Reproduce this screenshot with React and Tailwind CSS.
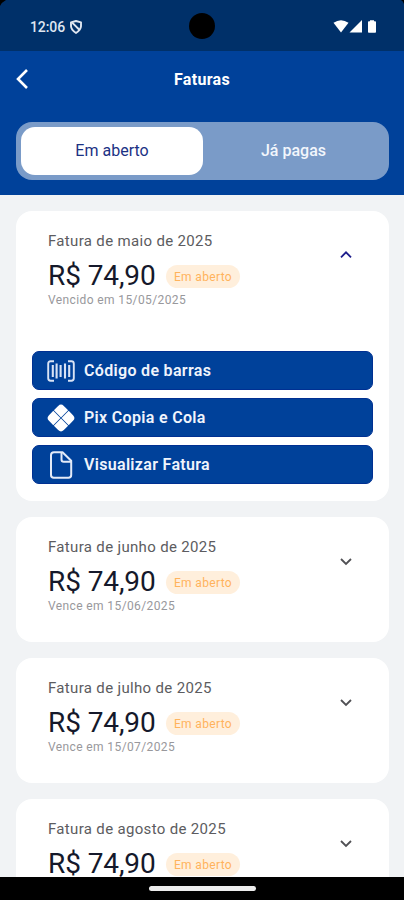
const invoices = [
  { month: "maio", due: "Vencido em 15/05/2025", open: true },
  { month: "junho", due: "Vence em 15/06/2025" },
  { month: "julho", due: "Vence em 15/07/2025" },
  { month: "agosto", due: "Vence em 15/08/2025" },
];

function StatusBar() {
  return (
    <div className="relative flex h-[51px] shrink-0 items-center justify-between bg-[#003069] pl-[30px] pr-[26px] text-white">
      <svg className="absolute left-0 top-0" width="8" height="8" viewBox="0 0 8 8">
        <path d="M0 0H6Q2 2 0 6Z" fill="#000" />
      </svg>
      <svg className="absolute right-0 top-0" width="5" height="5" viewBox="0 0 5 5">
        <path d="M5 0H2Q4 1 5 4Z" fill="#000" />
      </svg>
      <div className="flex items-center gap-[5px] pt-[2px]">
        <span className="text-[14px] font-medium leading-4 tracking-[-0.1px] text-[#dfe6f1]">12:06</span>
        <svg width="12" height="14" viewBox="0 0 12 14" fill="none" stroke="#dfe6f1" strokeWidth="1.9">
          <path d="M6 1L11 2.3V6.3Q10.8 10 6 13Q1.2 10 1 6.3V2.3Z" strokeLinejoin="round" />
          <path d="M2.2 2.6L9.6 10" />
        </svg>
      </div>
      <div className="absolute left-1/2 top-[13px] size-[26px] -translate-x-1/2 rounded-full bg-black" />
      <svg className="mt-[1px]" width="45" height="15" viewBox="0 0 45 15" fill="#fff">
        <path d="M0.5 3.7Q8 -1.4 15.5 3.7L8 13.5Z" />
        <path d="M29 1V13.5H16.5Z" />
        <path d="M37 1.2H41V2.3H42.2Q43 2.3 43 3.2V12.7Q43 13.7 42.2 13.7H35.8Q35 13.7 35 12.7V3.2Q35 2.3 35.8 2.3H37Z" />
      </svg>
    </div>
  );
}

function Header() {
  return (
    <header className="h-[144px] shrink-0 bg-[#00419a] px-4">
      <div className="grid h-[56px] grid-cols-[24px_1fr_24px] items-center text-white">
        <svg width="12" height="20" viewBox="0 0 12 20" fill="none" stroke="#fff" strokeWidth="2.6">
          <path d="M11 1L2 10L11 19" />
        </svg>
        <h1 className="pt-px text-center text-[16px] font-bold tracking-[0.3px]">Faturas</h1>
      </div>
      <div className="mt-[15px] flex h-[58px] w-[373px] rounded-[16px] bg-[#7a9bc8] p-[5px] text-[16px]">
        <button className="w-[182px] rounded-[14px] bg-white pb-px text-[#1b3184]">Em aberto</button>
        <button className="flex-1 pb-px font-medium text-[#f2f6fc]">Já pagas</button>
      </div>
    </header>
  );
}

function BarcodeIcon() {
  return (
    <svg width="28" height="22" viewBox="0 0 28 22" fill="none" stroke="#d9e3f5">
      <path d="M7 1.3H3.6Q1.2 1.3 1.2 3.7V18.3Q1.2 20.7 3.6 20.7H7M21 1.3H24.4Q26.8 1.3 26.8 3.7V18.3Q26.8 20.7 24.4 20.7H21" strokeWidth="1.9" />
      <path d="M5.8 5V17M9.6 3.5V18.5M13.6 5V17M18 3.5V18.5M22.2 5V17" strokeWidth="2.1" />
    </svg>
  );
}

function PixIcon() {
  return (
    <svg width="28" height="28" viewBox="0 0 28 28" fill="#fff">
      <g transform="rotate(45 14 14)">
        <path d="M13.6 13.6V3.5H7.5Q3.5 3.5 3.5 7.5V13.6Z" />
        <path d="M14.4 13.6V3.5H20.5Q24.5 3.5 24.5 7.5V13.6Z" />
        <path d="M13.6 14.4V24.5H7.5Q3.5 24.5 3.5 20.5V14.4Z" />
        <path d="M14.4 14.4V24.5H20.5Q24.5 24.5 24.5 20.5V14.4Z" />
      </g>
    </svg>
  );
}

function FileIcon() {
  return (
    <svg width="24" height="28" viewBox="0 0 24 28" fill="none" stroke="#e3eaf8" strokeWidth="2" strokeLinejoin="round">
      <path d="M5 1.2H13.5L22.2 9.8V24Q22.2 26.8 19.4 26.8H4.8Q2 26.8 2 24V4Q2 1.2 5 1.2Z" />
      <path d="M12.5 1.5V8.5Q12.5 10.8 14.8 10.8H22" />
    </svg>
  );
}

function Action({ icon, label }) {
  return (
    <button className="flex h-[39px] w-[341px] items-center rounded-[7px] border border-[#003092] bg-[#00419a] pl-[14px] text-[16px] font-semibold tracking-[0.32px] text-[#f0f4fc]">
      <span className="mr-[9px] flex w-[28px] justify-center">{icon}</span>
      {label}
    </button>
  );
}

function Invoice({ month, due, open }) {
  return (
    <section className={"w-[373px] shrink-0 rounded-[16px] bg-white px-4 " + (open ? "h-[290px]" : "h-[125px]")}>
      <div className="flex justify-between pl-4 pr-[21px] pt-[20px]">
        <div>
          <div className="text-[15px] leading-5 tracking-[0.33px] text-[#5c5c60]">Fatura de {month} de 2025</div>
          <div className="mt-[9px] flex h-[32px] items-center">
            <span className="w-[108px] text-[28px] leading-8 tracking-[-0.1px] text-[#15192b]">R$ 74,90</span>
            <span className="ml-[10px] mt-px flex h-[23px] w-[74px] items-center justify-center rounded-full bg-[#ffefdc] text-[12px] tracking-[0.35px] text-[#ffb35c]">
              Em aberto
            </span>
          </div>
          <div className="text-[12px] leading-4 tracking-[0.39px] text-[#98989c]">{due}</div>
        </div>
        <svg className={open ? "mt-[19px]" : "mt-[20px]"} width="12" height="9" viewBox="0 0 12 9" fill="none" stroke={open ? "#1d1d8c" : "#505054"} strokeWidth="1.8">
          <path d={open ? "M1 7.3L6 2.3L11 7.3" : "M1 2L6 7L11 2"} />
        </svg>
      </div>
      {open && (
        <div className="mt-[43px] flex flex-col gap-[8px]">
          <Action icon={<BarcodeIcon />} label="Código de barras" />
          <Action icon={<PixIcon />} label="Pix Copia e Cola" />
          <Action icon={<FileIcon />} label="Visualizar Fatura" />
        </div>
      )}
    </section>
  );
}

export default function App() {
  return (
    <div className="flex h-[900px] w-[404px] flex-col overflow-hidden bg-[#f1f3f5] font-[Roboto,sans-serif]">
      <StatusBar />
      <Header />
      <main className="flex min-h-0 flex-1 flex-col gap-4 overflow-hidden px-4 pt-4">
        {invoices.map((invoice) => (
          <Invoice key={invoice.month} {...invoice} />
        ))}
      </main>
      <footer className="flex h-[23px] shrink-0 justify-center bg-black pt-[9px]">
        <div className="h-[5px] w-[107px] rounded-full bg-[#ececec]" />
      </footer>
    </div>
  );
}
